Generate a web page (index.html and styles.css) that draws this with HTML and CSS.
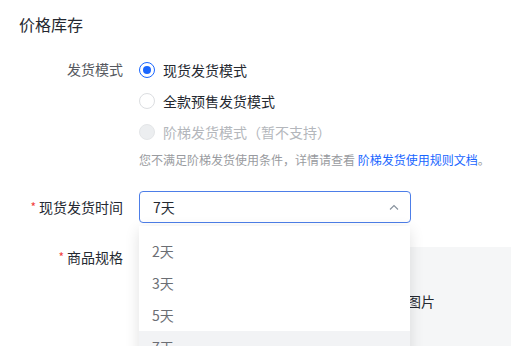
FILE: index.html
```html
<!DOCTYPE html>
<html lang="zh">
<head>
<meta charset="utf-8">
<link rel="stylesheet" href="styles.css">
</head>
<body>
<div class="page">
  <div class="title">价格库存</div>
  <div class="form">
    <div class="row row-mode">
      <div class="label">发货模式</div>
      <div class="control">
        <div class="radio-list">
          <div class="radio-item"><span class="radio checked"></span><span class="radio-text">现货发货模式</span></div>
          <div class="radio-item"><span class="radio"></span><span class="radio-text">全款预售发货模式</span></div>
          <div class="radio-item disabled"><span class="radio"></span><span class="radio-text">阶梯发货模式（暂不支持）</span></div>
        </div>
        <div class="help">您不满足阶梯发货使用条件，详情请查看 <a class="link">阶梯发货使用规则文档</a>。</div>
      </div>
    </div>
    <div class="row row-time">
      <div class="label"><span class="req">*</span>现货发货时间</div>
      <div class="control select-wrap">
        <div class="select">
          <span class="select-value">7天</span>
          <svg class="chevron" width="10" height="6" viewBox="0 0 10 6"><path d="M1 5.5 L5 1.5 L9 5.5" fill="none" stroke="#86909c" stroke-width="1.1"/></svg>
        </div>
        <div class="dropdown">
          <div class="option">2天</div>
          <div class="option">3天</div>
          <div class="option">5天</div>
          <div class="option active">7天</div>
        </div>
      </div>
    </div>
    <div class="row row-spec">
      <div class="label"><span class="req">*</span>商品规格</div>
      <div class="control">
        <div class="spec-panel">
          <div class="spec-line">添加规格图片</div>
        </div>
      </div>
    </div>
  </div>
</div>
</body>
</html>
```

FILE: styles.css
```css
* { box-sizing: border-box; }
html, body { margin: 0; padding: 0; background: #fff; overflow: hidden; }
body {
  font-family: "Noto Sans CJK SC", "Noto Sans", sans-serif;
  color: #252931;
  width: 511px;
  height: 346px;
}
.page { padding-top: 12px; }
.title {
  padding-left: 19px;
  font-size: 16px;
  line-height: 24px;
  color: #252931;
}
.form { display: flex; flex-direction: column; }
.row { display: flex; gap: 16px; }
.label {
  width: 123px;
  flex: none;
  text-align: right;
  font-size: 14px;
  color: #565960;
}
.req { color: #f24040; font-size: 12px; margin-right: 3px; position: relative; top: -1px; }
.control { flex: 1; min-width: 0; }

.row-mode { margin-top: 18px; }
.row-mode .label { line-height: 31px; }
.radio-item { display: flex; align-items: center; height: 31px; }
.radio {
  width: 16px; height: 16px; border-radius: 50%;
  border: 1px solid #dcdee1;
  background: #fff;
  flex: none;
  position: relative;
}
.radio.checked { border-color: #1966ff; }
.radio.checked::after {
  content: ""; position: absolute; left: 3px; top: 3px;
  width: 8px; height: 8px; border-radius: 50%; background: #1966ff;
}
.radio-item.disabled .radio { background: #eceef0; border-color: #e4e6e8; }
.radio-text { margin-left: 8px; font-size: 14px; color: #252931; }
.radio-item.disabled .radio-text { color: #b4b7bc; }
.help { font-size: 12px; line-height: 20px; color: #999ba0; margin-top: 3px; }
.link { color: #1966ff; }

.row-time { margin-top: 21px; }
.row-time .label { line-height: 32px; color: #252931; }
.select-wrap { position: relative; flex: none; width: 272px; }
.select {
  height: 32px;
  border: 1px solid #4d7ee8;
  border-radius: 4px;
  display: flex; align-items: center; justify-content: space-between;
  padding: 0 11px 0 13px;
  font-size: 14px; color: #252931;
}
.dropdown {
  position: absolute; left: 0; top: 35px; width: 271px;
  background: #fff;
  box-shadow: 0 4px 14px rgba(0,0,0,0.12);
  padding-top: 9px;
  z-index: 5;
}
.option {
  height: 32px; line-height: 32px;
  padding-left: 13px;
  font-size: 14px; color: #6b6e74;
}
.option.active { background: #f2f3f5; }

.row-spec { margin-top: 23px; }
.row-spec .label { line-height: 20px; color: #252931; }
.spec-panel {
  background: #f5f6f7;
  height: 120px;
  padding: 44px 0 0 212px;
}
.spec-line { font-size: 14px; line-height: 20px; color: #252931; }
```
